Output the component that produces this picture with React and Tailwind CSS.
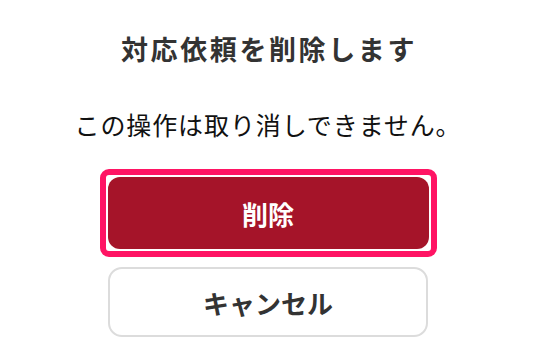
export default function App() {
  const font = { fontFamily: '"Noto Sans CJK JP", "Noto Sans", sans-serif' };

  return (
    <div className="w-full h-[358px] bg-white flex flex-col items-center pt-[29px]" style={font}>
      {/* Title */}
      <h1 className="text-[27px] leading-[40px] font-bold text-[#333333] tracking-[2.6px] pl-[2px]">
        対応依頼を削除します
      </h1>

      {/* Message */}
      <p className="mt-[35px] text-[25px] leading-[40px] text-[#111111] tracking-[0.9px]">
        この操作は取り消しできません。
      </p>

      {/* Delete (focused) */}
      <div className="mt-[25px] rounded-[9px] border-[6px] border-[#ff1464] p-[2px]">
        <button className="w-[321px] h-[72px] rounded-[12px] bg-[#a51429] text-white text-[26px] font-bold flex items-center justify-center">
          削除
        </button>
      </div>

      {/* Cancel */}
      <button className="mt-[10px] w-[320px] h-[70px] rounded-[14px] border-2 border-[#dcdcdc] bg-white text-[#333333] text-[26px] font-bold flex items-center justify-center">
        キャンセル
      </button>
    </div>
  );
}
